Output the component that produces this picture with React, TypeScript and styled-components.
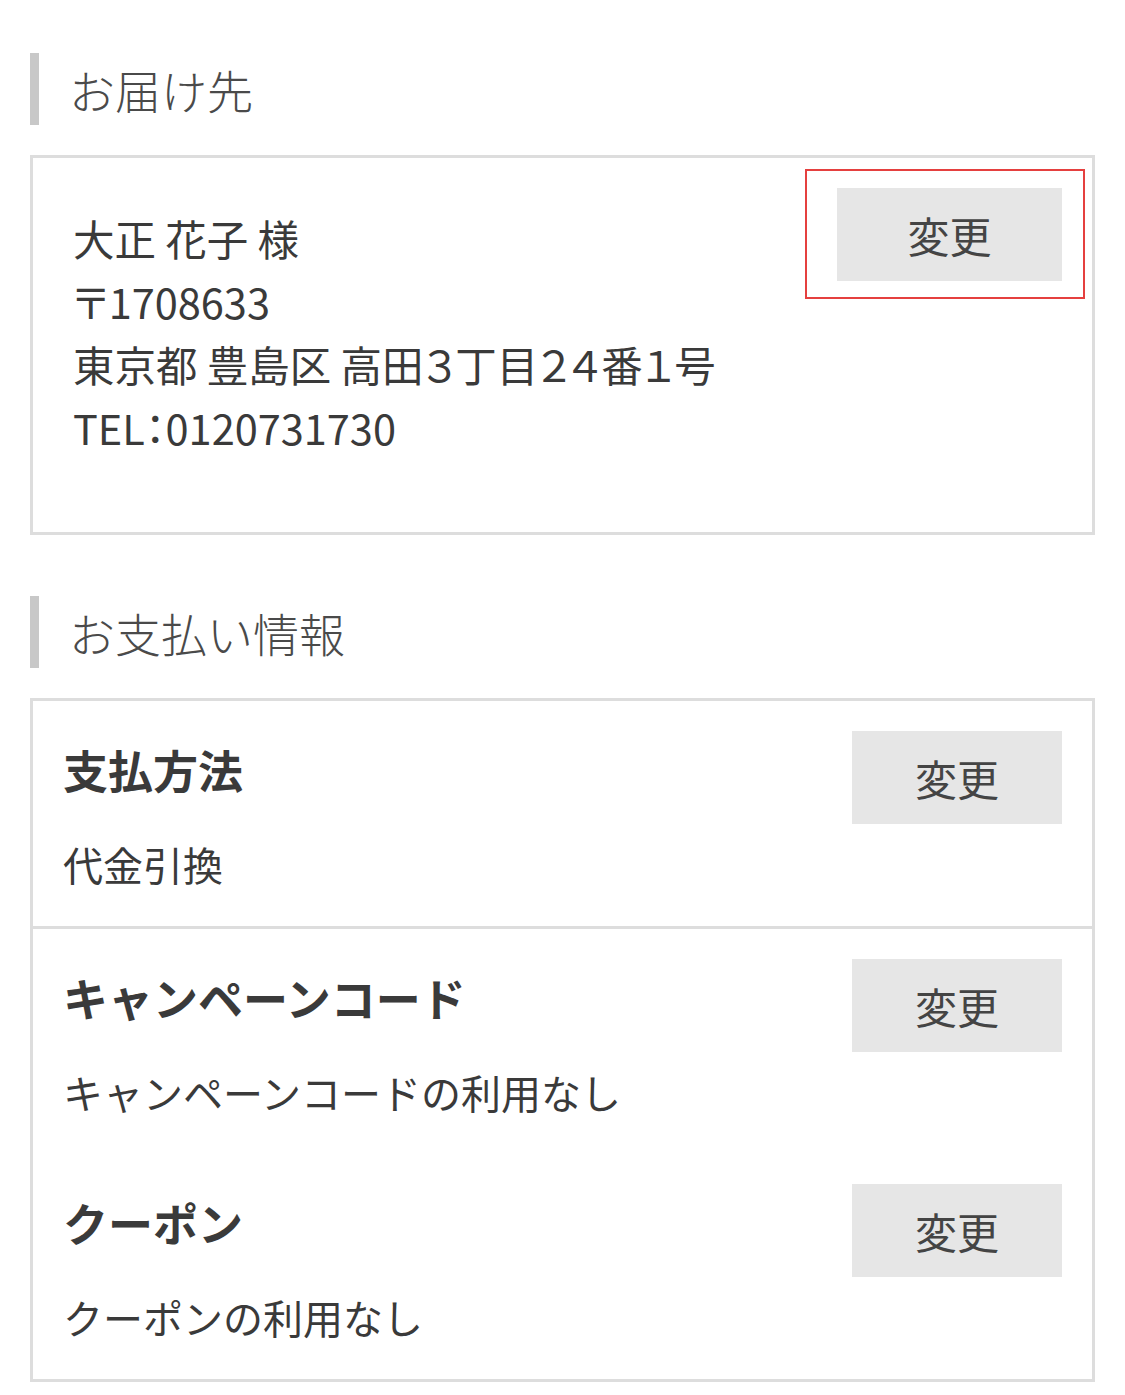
import React from "react";
import styled, { createGlobalStyle } from "styled-components";

const GlobalStyle = createGlobalStyle`
  body {
    margin: 0;
    background: #fff;
    font-family: "Noto Sans CJK JP", "Noto Sans", sans-serif;
    color: #3a3a3a;
  }
`;

const Page = styled.div`
  width: 1125px;
  padding: 53px 30px 0;
  box-sizing: border-box;
`;

const SectionTitle = styled.h2<{ $top?: number }>`
  margin: ${(p) => p.$top ?? 0}px 0 0;
  height: 72px;
  display: flex;
  align-items: center;
  border-left: 9px solid #c8c8c8;
  padding-left: 30px;
  font-size: 46px;
  font-weight: 300;
  color: #4a4a4a;
  line-height: 1;
`;

const Box = styled.div`
  margin-top: 30px;
  border: 3px solid #dddddd;
`;

const AddressBox = styled.div`
  display: flex;
  justify-content: space-between;
  align-items: flex-start;
  padding: 11px 7px 73px 40px;
`;

const AddressLines = styled.div`
  padding-top: 38px;
  font-size: 41.5px;
  line-height: 63px;
  color: #3a3a3a;
  font-feature-settings: "palt";
`;

const Highlight = styled.div`
  border: 2px solid #e5403f;
  padding: 17px 21px 16px 30px;
`;

const ChangeButton = styled.button<{ $width: number }>`
  width: ${(p) => p.$width}px;
  height: 93px;
  border: 0;
  background: #e6e6e6;
  color: #444;
  font-family: inherit;
  font-size: 42px;
  cursor: pointer;
  padding: 0;
`;

const Group = styled.div<{ $divider?: boolean }>`
  border-bottom: ${(p) => (p.$divider ? "3px solid #dddddd" : "0")};
`;

const Item = styled.div`
  padding: 30px 30px 37px 30px;
`;

const ItemHead = styled.div`
  display: flex;
  justify-content: space-between;
  align-items: center;
`;

const ItemTitle = styled.h3`
  margin: 0 0 16px;
  font-size: 45px;
  font-weight: 700;
  color: #3a3a3a;
  line-height: 1.2;
`;

const ItemValue = styled.p`
  margin: 15px 0 0;
  font-size: 40px;
  line-height: 50px;
  color: #3a3a3a;
`;

const items = [
  { group: 0, title: "支払方法", value: "代金引換" },
  { group: 1, title: "キャンペーンコード", value: "キャンペーンコードの利用なし" },
  { group: 1, title: "クーポン", value: "クーポンの利用なし" },
];

const PaymentItem = ({ title, value }: { title: string; value: string }) => (
  <Item>
    <ItemHead>
      <ItemTitle>{title}</ItemTitle>
      <ChangeButton $width={210}>変更</ChangeButton>
    </ItemHead>
    <ItemValue>{value}</ItemValue>
  </Item>
);

export default function App() {
  return (
    <Page>
      <GlobalStyle />
      <SectionTitle>お届け先</SectionTitle>
      <Box>
        <AddressBox>
          <AddressLines>
            <div>大正 花子 様</div>
            <div>〒1708633</div>
            <div>東京都 豊島区 高田３丁目２４番１号</div>
            <div>TEL：0120731730</div>
          </AddressLines>
          <Highlight>
            <ChangeButton $width={225}>変更</ChangeButton>
          </Highlight>
        </AddressBox>
      </Box>

      <SectionTitle $top={61}>お支払い情報</SectionTitle>
      <Box>
        <Group $divider>
          {items
            .filter((i) => i.group === 0)
            .map((i) => (
              <PaymentItem key={i.title} title={i.title} value={i.value} />
            ))}
        </Group>
        <Group>
          {items
            .filter((i) => i.group === 1)
            .map((i) => (
              <PaymentItem key={i.title} title={i.title} value={i.value} />
            ))}
        </Group>
      </Box>
    </Page>
  );
}
